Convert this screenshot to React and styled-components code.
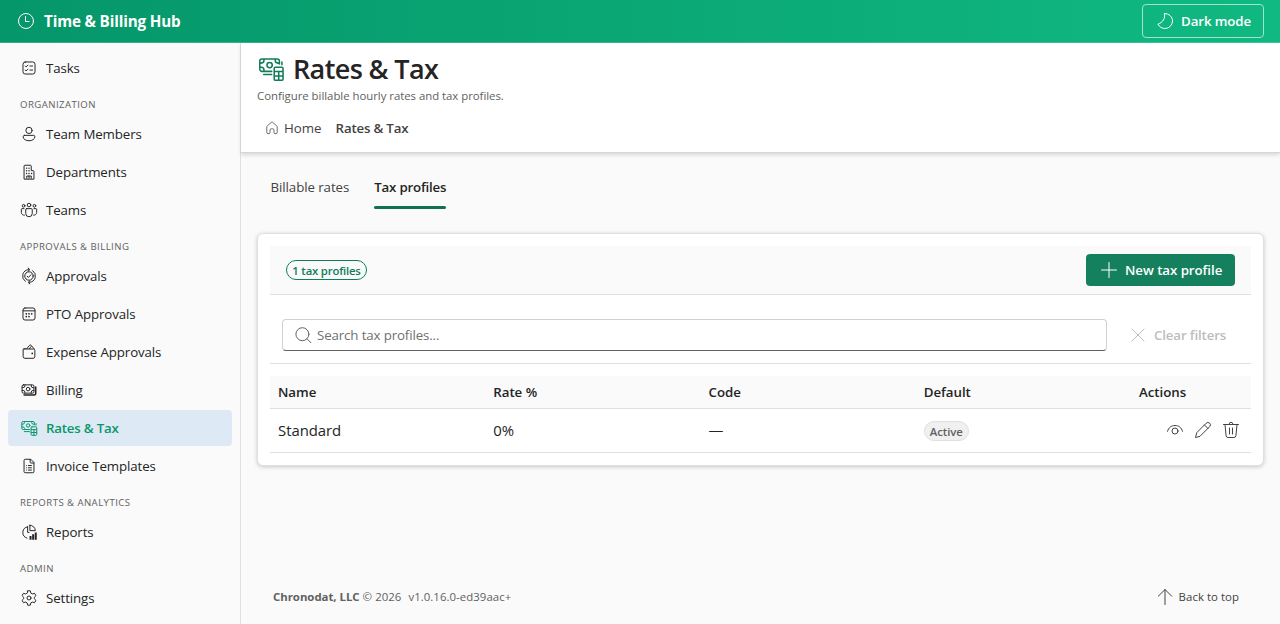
import React from "react";
import styled, { createGlobalStyle, css } from "styled-components";

const GlobalStyle = createGlobalStyle`
  * { box-sizing: border-box; }
  body {
    margin: 0;
    background: #fafafa;
    color: #242424;
    font-family: "Segoe UI", "Open Sans", "Noto Sans", sans-serif;
    font-size: 13.3px;
    line-height: 20px;
    letter-spacing: -0.1px;
    overflow: hidden;
  }
  button, input { font: inherit; color: inherit; letter-spacing: inherit; }
`;

const Svg = styled.svg`
  flex: none;
  display: block;
  width: ${(p) => p.$size}px;
  height: ${(p) => p.$size}px;
  fill: none;
  stroke: currentColor;
  stroke-width: ${(p) => p.$weight || 1};
  stroke-linecap: round;
  stroke-linejoin: round;
`;

const glyphs = {
  clock: <><circle cx="10" cy="10" r="7.5" /><path d="M9.5 5.5v5H13" /></>,
  moon: <path d="M9.6 2.5c.6 5.2-1.6 8.9-6.7 10.7 1.5 2.6 4 4.3 7 4.3a7.5 7.5 0 0 0 7.6-7.5c0-4.2-3.4-7.4-7.9-7.5z" />,
  tasks: <><rect x="3.3" y="3.3" width="13.4" height="13.4" rx="2.5" /><path d="M5.8 7.8l1 1 2-2M11 7.8h3M5.8 12.3l1 1 2-2M11 12.3h3" /></>,
  person: <><circle cx="10" cy="6" r="3.5" /><path d="M5 11.5h10a1.5 1.5 0 0 1 1.5 1.5c0 2.8-3 4.5-6.5 4.5S3.5 15.8 3.5 13A1.5 1.5 0 0 1 5 11.5z" /></>,
  building: <><path d="M4.5 17.5v-14a1 1 0 0 1 1-1h6a1 1 0 0 1 1 1v5h2a1 1 0 0 1 1 1v8zM7.5 17v-2.5h5V17M10 14.5V17" /><path strokeWidth="1.6" d="M7.3 5.7h.01M10 5.7h.01M7.3 8.7h.01M10 8.7h.01M7.3 11.7h.01M10 11.7h.01M12.9 11.7h.01" /></>,
  team: <><circle cx="10" cy="4.5" r="2" /><circle cx="4" cy="5.3" r="1.5" /><circle cx="16" cy="5.3" r="1.5" /><path d="M7.2 8.5h5.6a.8.8 0 0 1 .8.8v4.6a3.6 3.6 0 0 1-7.2 0V9.3a.8.8 0 0 1 .8-.8zM4.5 8.5H2.3a.8.8 0 0 0-.8.8v3.5a3 3 0 0 0 3.4 3M15.5 8.5h2.2a.8.8 0 0 1 .8.8v3.5a3 3 0 0 1-3.4 3" /></>,
  approvals: <><circle cx="10" cy="10" r="4.7" /><path d="M7.9 10.2l1.4 1.4 2.9-3M9.5 2.9A7.2 7.2 0 0 0 6 16M10.5 17.1A7.2 7.2 0 0 0 14 4M9 1.2l2 1.7-2 1.7M11 15.4l-2 1.7 2 1.7" /></>,
  calendar: <><rect x="3.3" y="3.3" width="13.4" height="13.4" rx="2.3" /><path d="M3.5 6.5h13" /><path strokeWidth="1.9" d="M7 9.8h.01M10 9.8h.01M13 9.8h.01M7 12.8h.01M10 12.8h.01" /></>,
  wallet: <><path d="M4.5 6.7H15a1.5 1.5 0 0 1 1.5 1.5V15a2 2 0 0 1-2 2h-9a2 2 0 0 1-2-2V7.5a1.3 1.3 0 0 1 1.3-1.3h1M7.5 6.3l3.2-3.8a1 1 0 0 1 1.5-.1l3.3 3.8M10.5 6.2l2-2.3" /><path strokeWidth="1.9" d="M13.6 11.6h.01" /></>,
  money: <><rect x="2.3" y="4.3" width="13.2" height="9.2" rx="1.5" /><circle cx="9" cy="9" r="2" /><path d="M2.5 7.3h1a2 2 0 0 0 2-2v-1M12.5 4.5v1a2 2 0 0 0 2 2h1M2.5 10.5h1a2 2 0 0 1 2 2v1M12.5 13.5v-1a2 2 0 0 1 2-2h1" /><path strokeWidth="1.6" d="M4.5 15.5h11a2 2 0 0 0 2-2v-7" /></>,
  rates: <><path d="M10.5 11.7H3.5A1.5 1.5 0 0 1 2 10.2V4.3a1.5 1.5 0 0 1 1.5-1.5h11A1.5 1.5 0 0 1 16 4.3V6.5M2 5.8h1a2 2 0 0 0 2-2v-1M13 2.8v1a2 2 0 0 0 2 2h1M2 8.7h1a2 2 0 0 1 2 2v1M4.8 14h5.7M17.8 5v2" /><circle cx="9" cy="7.2" r="1.9" /><path d="M13.3 8.7h4.3a1 1 0 0 1 1 1v7.4a1 1 0 0 1-1 1h-4.3a1 1 0 0 1-1-1V9.7a1 1 0 0 1 1-1zM12.3 11.8h6.3M12.3 15h6.3M15.5 11.8v6.3" /></>,
  document: <><path d="M11.5 2.5H5.8a1.3 1.3 0 0 0-1.3 1.3v12.4a1.3 1.3 0 0 0 1.3 1.3h8.4a1.3 1.3 0 0 0 1.3-1.3V6.5zM11.3 2.7v3a1 1 0 0 0 1 1h3" /><path d="M7.3 9.5h.01M9.3 9.5h3.4M7.3 12h.01M9.3 12h3.4M7.3 14.5h.01M9.3 14.5h3.4" /></>,
  reports: <><path d="M8.5 4.2a6.5 6.5 0 0 0-.8 12.6M8.5 4.2V10.5h1.5M11 2.5v6h6a6 6 0 0 0-6-6z" /><path strokeWidth="2.2" strokeLinecap="butt" d="M11.7 14.5v4M14.6 12.5v6M17.5 10.5v8" /></>,
  settings: <><path d="M8.6 2h2.8l.6 2.5 1.7 1 2.5-.7 1.5 2.6-1.8 1.8v1.6l1.8 1.8-1.5 2.6-2.5-.7-1.7 1-.6 2.5H8.6L8 15.5l-1.7-1-2.5.7-1.5-2.6 1.8-1.8V9.2L2.3 7.4l1.5-2.6 2.5.7 1.7-1z" /><circle cx="10" cy="10" r="2.2" /></>,
  home: <path d="M9.3 2.8a1 1 0 0 1 1.4 0l5.3 4.6c.3.3.5.7.5 1.1v7a1.5 1.5 0 0 1-1.5 1.5h-1.5a1 1 0 0 1-1-1v-3.5a1.5 1.5 0 0 0-1.5-1.5h-2a1.5 1.5 0 0 0-1.5 1.5V16a1 1 0 0 1-1 1H5a1.5 1.5 0 0 1-1.5-1.5v-7c0-.4.2-.8.5-1.1z" />,
  plus: <path d="M10 2.5v15M2.5 10h15" />,
  search: <><circle cx="9.4" cy="9.2" r="6.5" /><path d="M14.1 13.9l3.8 3.8" /></>,
  close: <path d="M4 4l12 12M16 4L4 16" />,
  eye: <><path d="M2.5 11.3C3.5 7.5 6.3 5.5 10 5.5s6.5 2 7.5 5.8" /><circle cx="10" cy="11" r="3" /></>,
  edit: <path d="M13.2 3.2a2.3 2.3 0 0 1 3.5 3.4L7 16.3l-4.5 1.2L3.7 13zM11.5 5l3.5 3.5" />,
  trash: <path d="M2.5 4.5h15M8 4.3a2 2 0 0 1 4 0M4 4.5l1.1 11.3a2 2 0 0 0 2 1.7h5.8a2 2 0 0 0 2-1.7L16 4.5M8.5 8v6M11.5 8v6" />,
  up: <path d="M10 17.5v-15M3.3 9.2L10 2.5l6.7 6.7" />,
};

const Icon = ({ name, size = 20, weight }) => (
  <Svg viewBox="0 0 20 20" $size={size} $weight={weight} aria-hidden="true">
    {glyphs[name]}
  </Svg>
);

const Header = styled.header`
  display: flex;
  align-items: center;
  justify-content: space-between;
  height: 43px;
  padding: 0 16px;
  color: #fff;
  background: linear-gradient(90deg, #059669 0%, #10b981 100%);
  border-bottom: 1px solid rgba(255, 255, 255, 0.2);
`;

const Brand = styled.div`
  display: flex;
  align-items: center;
  gap: 8px;
  font-size: 15.2px;
  font-weight: 700;
  letter-spacing: -0.14px;
`;

const ThemeButton = styled.button`
  display: flex;
  align-items: center;
  gap: 6px;
  width: 122px;
  height: 34px;
  padding: 0 0 0 12px;
  background: transparent;
  border: 1px solid #a0e3cd;
  border-radius: 4px;
  color: #fff;
  font-weight: 600;
`;

const Body = styled.div`
  display: flex;
  height: 581px;
`;

const Sidebar = styled.nav`
  display: flex;
  flex-direction: column;
  gap: 2px;
  width: 241px;
  padding: 7px 8px 0;
  border-right: 1px solid #e0e0e0;
`;

const NavItem = styled.a`
  display: flex;
  align-items: center;
  gap: 8px;
  height: 36px;
  padding: 0 12px;
  border-radius: 4px;
  letter-spacing: -0.11px;
  ${(p) => p.$active && css`
    background: #ddeaf5;
    color: #0b9669;
    font-weight: 600;
    letter-spacing: -0.2px;
  `}
`;

const NavLabel = styled.div`
  height: 26px;
  padding: 7px 12px 0;
  color: #616161;
  font-size: 9.6px;
  letter-spacing: 0.45px;
  text-transform: uppercase;
`;

const Main = styled.main`
  flex: 1;
  display: flex;
  flex-direction: column;
  min-width: 0;
`;

const PageHeader = styled.section`
  height: 110px;
  padding: 8px 16px 0;
  background: #fff;
  border-bottom: 1px solid #d6d6d6;
  box-shadow: 0 2px 4px rgba(0, 0, 0, 0.14);
`;

const TitleRow = styled.div`
  display: flex;
  align-items: center;
  gap: 8px;
  height: 36px;
  color: #107c5a;
`;

const Title = styled.h1`
  margin: 0;
  color: #242424;
  font-size: 27px;
  font-weight: 570;
  line-height: 36px;
  letter-spacing: -0.62px;
`;

const Subtitle = styled.p`
  margin: 1px 0 0;
  color: #616161;
  font-size: 11.4px;
  line-height: 16px;
  letter-spacing: -0.03px;
`;

const Breadcrumb = styled.div`
  display: flex;
  align-items: center;
  height: 32px;
  margin-top: 8px;
  padding-left: 7px;
  color: #424242;
  letter-spacing: 0;
  svg { color: #616161; margin-right: 4px; }
  strong { margin-left: 14px; font-weight: 600; letter-spacing: -0.2px; }
`;

const Tabs = styled.div`
  display: flex;
  gap: 25px;
  padding: 13px 29px 0 29.5px;
  height: 56px;
`;

const Tab = styled.div`
  height: 43px;
  padding-top: 11px;
  color: ${(p) => (p.$active ? "#242424" : "#424242")};
  font-weight: ${(p) => (p.$active ? 600 : 400)};
  letter-spacing: ${(p) => (p.$active ? "-0.2px" : "-0.08px")};
  &::after {
    content: "";
    display: block;
    height: 3px;
    margin-top: 9px;
    border-radius: 2px;
    background: ${(p) => (p.$active ? "#0f7152" : "transparent")};
  }
`;

const Card = styled.section`
  height: 233px;
  margin: 24px 16px 0;
  padding: 12px;
  background: #fff;
  border: 1px solid #e0e0e0;
  border-radius: 6px;
  box-shadow: 0 1px 4px rgba(0, 0, 0, 0.2);
`;

const Toolbar = styled.div`
  display: flex;
  align-items: center;
  justify-content: space-between;
  height: 49px;
  padding: 0 16px;
  background: #fafafa;
  border-bottom: 1px solid #e0e0e0;
`;

const CountBadge = styled.span`
  width: 81px;
  height: 20px;
  border: 1px solid #107c5a;
  border-radius: 10px;
  color: #107c5a;
  text-align: center;
  font-size: 11.3px;
  font-weight: 600;
  line-height: 19px;
  letter-spacing: -0.17px;
  white-space: nowrap;
`;

const PrimaryButton = styled.button`
  display: flex;
  align-items: center;
  gap: 6px;
  width: 149px;
  height: 32px;
  padding: 0 0 0 13px;
  border: 0;
  border-radius: 4px;
  background: #15805e;
  color: #fff;
  font-weight: 600;
  letter-spacing: -0.06px;
  white-space: nowrap;
`;

const Filters = styled.div`
  display: flex;
  align-items: center;
  gap: 21px;
  height: 69px;
  padding: 12px 12px 0;
  border-bottom: 1px solid #e0e0e0;
`;

const SearchBox = styled.div`
  display: flex;
  align-items: center;
  gap: 4px;
  width: 825px;
  height: 32px;
  padding-left: 10px;
  border: 1px solid #d1d1d1;
  border-bottom-color: #616161;
  border-radius: 4px;
  color: #616161;
  input {
    flex: 1;
    padding: 0;
    border: 0;
    outline: 0;
    background: none;
    letter-spacing: -0.13px;
  }
  input::placeholder { color: #707070; opacity: 1; }
`;

const ClearButton = styled.div`
  display: flex;
  align-items: center;
  gap: 6px;
  color: #bdbdbd;
  font-weight: 600;
  letter-spacing: -0.15px;
  white-space: nowrap;
`;

const Row = styled.div`
  display: grid;
  grid-template-columns: repeat(4, 215.25px) 1fr;
  align-items: center;
  height: ${(p) => (p.$head ? 33 : 44)}px;
  margin-top: ${(p) => (p.$head ? 12 : 0)}px;
  padding-bottom: ${(p) => (p.$head ? 0 : 2)}px;
  border-bottom: 1px solid #e0e0e0;
  background: ${(p) => (p.$head ? "#fafafa" : "#fff")};
  font-size: ${(p) => (p.$head ? "13.3px" : "14.9px")};
  font-weight: ${(p) => (p.$head ? 600 : 400)};
  letter-spacing: -0.04px;
  > * { padding-left: 8px; }
`;

const StatusBadge = styled.span`
  display: block;
  width: 45px;
  height: 20px;
  margin-top: 2px;
  border: 1px solid #e0e0e0;
  border-radius: 10px;
  background: #f0f0f0;
  color: #616161;
  text-align: center;
  font-size: 11.3px;
  font-weight: 600;
  line-height: 19px;
`;

const Actions = styled.div`
  display: flex;
  justify-content: flex-end;
  gap: 8px;
  padding-right: 10px;
  color: #424242;
`;

const Footer = styled.footer`
  display: flex;
  align-items: center;
  justify-content: space-between;
  margin: auto 41px 16px 32px;
  height: 22px;
  color: #616161;
  font-size: 11.4px;
  letter-spacing: 0.05px;
  strong { font-weight: 700; letter-spacing: -0.02px; }
`;

const Version = styled.span`
  margin-left: 7px;
  letter-spacing: 0.05px;
`;

const BackToTop = styled.a`
  display: flex;
  align-items: center;
  gap: 4px;
  color: #424242;
`;

const nav = [
  ["tasks", "Tasks"],
  [null, "Organization"],
  ["person", "Team Members"],
  ["building", "Departments"],
  ["team", "Teams"],
  [null, "Approvals & Billing"],
  ["approvals", "Approvals"],
  ["calendar", "PTO Approvals"],
  ["wallet", "Expense Approvals"],
  ["money", "Billing"],
  ["rates", "Rates & Tax"],
  ["document", "Invoice Templates"],
  [null, "Reports & Analytics"],
  ["reports", "Reports"],
  [null, "Admin"],
  ["settings", "Settings"],
];

export default function App() {
  return (
    <>
      <GlobalStyle />
      <Header>
        <Brand><Icon name="clock" />Time &amp; Billing Hub</Brand>
        <ThemeButton><Icon name="moon" />Dark mode</ThemeButton>
      </Header>
      <Body>
        <Sidebar>
          {nav.map(([icon, label]) =>
            icon ? (
              <NavItem key={label} $active={icon === "rates"}>
                <Icon name={icon} size={18} weight={1.1} />{label}
              </NavItem>
            ) : (
              <NavLabel key={label}>{label}</NavLabel>
            )
          )}
        </Sidebar>
        <Main>
          <PageHeader>
            <TitleRow><Icon name="rates" size={28} weight={1.1} /><Title>Rates &amp; Tax</Title></TitleRow>
            <Subtitle>Configure billable hourly rates and tax profiles.</Subtitle>
            <Breadcrumb>
              <Icon name="home" size={16} weight={1.15} />
              <span>Home</span><strong>Rates &amp; Tax</strong>
            </Breadcrumb>
          </PageHeader>
          <Tabs><Tab>Billable rates</Tab><Tab $active>Tax profiles</Tab></Tabs>
          <Card>
            <Toolbar>
              <CountBadge>1 tax profiles</CountBadge>
              <PrimaryButton><Icon name="plus" />New tax profile</PrimaryButton>
            </Toolbar>
            <Filters>
              <SearchBox><Icon name="search" /><input placeholder="Search tax profiles..." /></SearchBox>
              <ClearButton><Icon name="close" />Clear filters</ClearButton>
            </Filters>
            <Row $head>
              <span>Name</span><span>Rate %</span><span>Code</span><span>Default</span><span>Actions</span>
            </Row>
            <Row>
              <span>Standard</span><span>0%</span><span>—</span>
              <div><StatusBadge>Active</StatusBadge></div>
              <Actions><Icon name="eye" /><Icon name="edit" /><Icon name="trash" /></Actions>
            </Row>
          </Card>
          <Footer>
            <div><strong>Chronodat, LLC</strong> © 2026<Version>v1.0.16.0-ed39aac+</Version></div>
            <BackToTop><Icon name="up" />Back to top</BackToTop>
          </Footer>
        </Main>
      </Body>
    </>
  );
}
